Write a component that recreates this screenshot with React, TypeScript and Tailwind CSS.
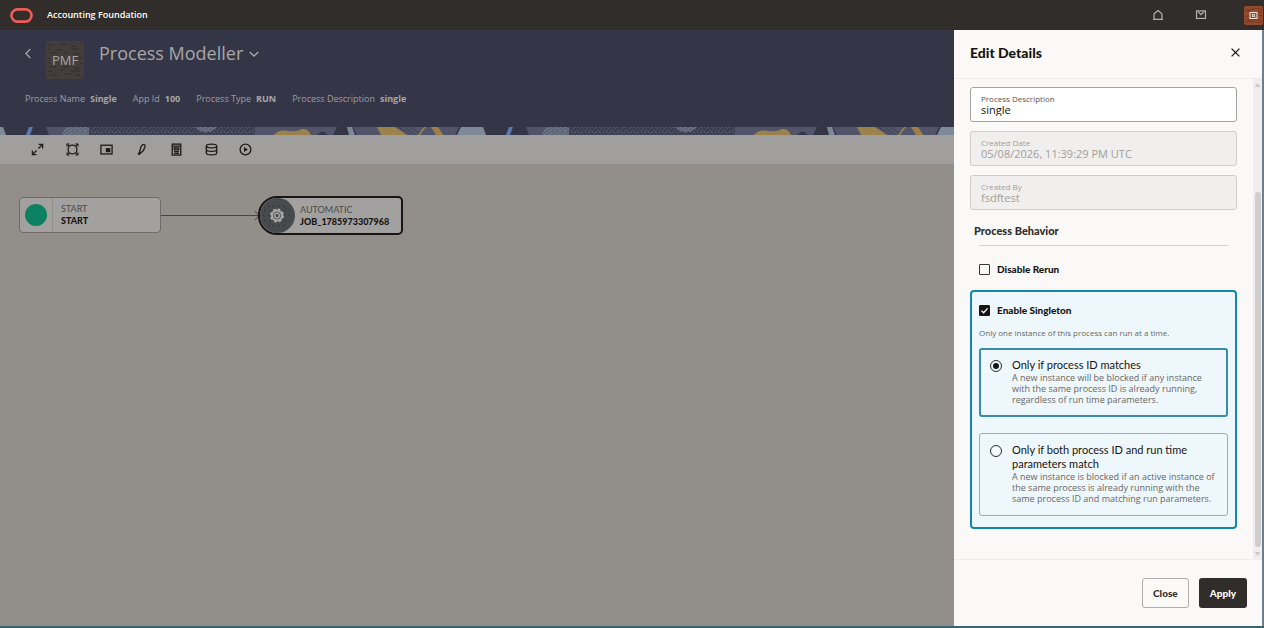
import { useState, type ReactNode } from "react";

function Glyph({ size, children }: { size: number; children: ReactNode }) {
  return (
    <svg width={size} height={size} viewBox="0 0 14 14" fill="none" stroke="currentColor" strokeWidth="1.4" aria-hidden="true" className="shrink-0">
      {children}
    </svg>
  );
}

function TopBar() {
  return (
    <header className="flex h-[30px] shrink-0 items-center bg-[#312d2a]">
      <svg width="23" height="15" viewBox="0 0 23 15" className="ml-[10px] shrink-0" role="img" aria-label="Oracle">
        <rect x="1.5" y="1.4" width="20" height="12.2" rx="6.1" fill="none" stroke="#ee5e57" strokeWidth="2.6" />
      </svg>
      <span className="ml-[14px] text-[9px] font-semibold text-white">Accounting Foundation</span>
      <div className="ml-auto flex items-center text-[#b5b2ae]">
        <button type="button" aria-label="Home" className="mr-[31px]">
          <Glyph size={12}>
            <path d="M2.4 12.2V5.6L7 1.8l4.6 3.8v6.6M1.2 12.2h11.6" />
          </Glyph>
        </button>
        <button type="button" aria-label="Messages" className="mr-[37px]">
          <Glyph size={12}>
            <rect x="1.8" y="2.2" width="10.4" height="8.8" />
            <path d="M3.6 3.2 7 6.6l3.4-3.4" />
          </Glyph>
        </button>
        <button type="button" aria-label="Account" className="mr-px h-[19px] w-[19px]">
          <svg width="19" height="19" viewBox="0 0 19 19">
            <rect width="19" height="19" rx="2" fill="#924b2c" />
            <path d="M1 3q4 2 8 0t9 1M1 6q3-2 5 0M13 6q3-1 5 1M1 10q2 1 4 0M14 10q2-1 4 0M1 13q3 2 6 1t11 0M1 16q5-1 9 0t8 0" stroke="#6f361f" strokeWidth=".8" fill="none" />
            <rect x="6" y="6.5" width="7" height="6" fill="none" stroke="#f3e7df" />
            <path d="M8.5 8v3M8.5 8.5h2v1.8h-2M10.5 10l.6 1.4" fill="none" stroke="#f3e7df" strokeWidth=".8" />
          </svg>
        </button>
      </div>
    </header>
  );
}

const facts: [string, string][] = [
  ["Process Name", "Single"],
  ["App Id", "100"],
  ["Process Type", "RUN"],
  ["Process Description", "single"],
];

function Banner() {
  return (
    <section className="h-[97px] shrink-0 bg-[#343647] text-[#a8a6a5]">
      <div className="flex h-[58px] items-start pt-[11px] pl-[22px]">
        <button type="button" aria-label="Back" className="mt-[6px]">
          <Glyph size={13}>
            <path d="M9 2 4.2 7 9 12" />
          </Glyph>
        </button>
        <div className="ml-[11px] grid h-[38px] w-[38px] place-items-center">
          <svg width="38" height="38" viewBox="0 0 38 38" className="col-start-1 row-start-1" aria-hidden="true">
            <rect width="38" height="38" rx="4" fill="#433e3b" />
            <path
              d="M2 4h6m5-1h7m5 2h5m3-2h3M1 8h4m6 1h6m8-1h8M4 12h8m6 0h4m6 1h7M1 17h3m28 0h5M2 22h2m30 0h3M3 26h7m5 0h8m5 1h6M1 30h6m7-1h5m6 1h9M4 34h8m6-1h7m4 1h5"
              stroke="#322d2a"
            />
          </svg>
          <span className="col-start-1 row-start-1 text-[13px] leading-none">PMF</span>
        </div>
        <h1 className="ml-[15px] text-[18px] leading-[24px]">Process Modeller</h1>
        <button type="button" aria-label="Open process menu" className="mt-[7px] ml-[5px]">
          <Glyph size={12}>
            <path d="M2 4.6 7 9.4l5-4.8" strokeWidth="1.7" />
          </Glyph>
        </button>
      </div>
      <dl className="flex gap-4 pt-[4px] pl-[25px] text-[9px] leading-[14px] whitespace-nowrap">
        {facts.map(([name, value]) => (
          <div key={name} className="flex gap-[5px]">
            <dt className="text-[#9f9da1]">{name}</dt>
            <dd className="font-bold">{value}</dd>
          </div>
        ))}
      </dl>
    </section>
  );
}

function PatternStrip() {
  return (
    <svg width="100%" height="8" className="block shrink-0" aria-hidden="true">
      <defs>
        <pattern id="speckle" width="7" height="5" patternUnits="userSpaceOnUse">
          <rect width="7" height="5" fill="#3a3d50" />
          <path d="M0 .5h1M3 .5h2M1 2.5h1M5 2.5h1M0 4.5h2M4 4.5h1M2 1.5h1M6 3.5h1" stroke="#50566b" />
        </pattern>
        <pattern id="light-speckle" width="5" height="4" patternUnits="userSpaceOnUse">
          <rect width="5" height="4" fill="#5d6577" />
          <path d="M0 .5h1M3 1.5h1M1 2.5h1M4 3.5h1" stroke="#788391" />
        </pattern>
        <pattern id="strip" width="480" height="8" patternUnits="userSpaceOnUse">
          <rect width="480" height="8" fill="#343647" />
          <path d="M0 0h3l3 8H0zM347 0h5l3 8h-6zM461 0h19v8h-23z" fill="#7d8899" />
          <path d="M29 0h4l-3 8h-4z" fill="#5d7aae" />
          <path d="M46 0h20l-5 8H49z" fill="#50546a" />
          <path d="M66 0h23v8H61z" fill="url(#light-speckle)" />
          <path d="M89 0h166v8H89z" fill="url(#speckle)" />
          <path d="M195 0h22q-4 5-11 5t-11-5z" fill="url(#light-speckle)" />
          <path d="M255 0h82l-4 8h-5q-5-7-11 0h-62zM353 0h106l-4 8H357z" fill="#52556a" />
          <path d="M274 8q5-6 14-4 9 1 14-2 6-1 9 6z" fill="#9a824a" />
          <path d="M377 0h18l12 8h-26zM431 0h7l5 8h-7zM424 0h2l-6 8h-2z" fill="#9a824a" />
          <path d="M398 0l14 8M404 0l12 8M410 0l9 6" stroke="#3d4054" />
        </pattern>
      </defs>
      <rect width="100%" height="8" fill="url(#strip)" />
    </svg>
  );
}

const tools: { name: string; art: ReactNode }[] = [
  { name: "Fit to screen", art: <path d="M8.2 1.5h4.3v4.3M12.5 1.5 8 6M5.8 12.5H1.5V8.2M1.5 12.5 6 8" /> },
  {
    name: "Layout",
    art: (
      <>
        <circle cx="7" cy="7" r="4.8" />
        <path d="M1 4V1h3M10 1h3v3M13 10v3h-3M4 13H1v-3" strokeWidth="1" />
        <path d="M1.4 1.4l2.2 2.2M12.6 1.4l-2.2 2.2M1.4 12.6l2.2-2.2M12.6 12.6l-2.2-2.2" />
      </>
    ),
  },
  {
    name: "Overview",
    art: (
      <>
        <rect x="1" y="2.4" width="12" height="9.4" />
        <rect x="7" y="6.2" width="3.4" height="3" fill="currentColor" />
      </>
    ),
  },
  { name: "Edit", art: <path d="M6.6 3.6Q8.4 1.2 9.8 1.4q1.6.6 1 2.6L9 8.2 6 10.8 4.8 10zM4.9 9.6 3.4 12.6M4 12.8l2.4-2.2" /> },
  {
    name: "Definition",
    art: (
      <>
        <rect x="2.4" y="1.2" width="9.2" height="11.8" />
        <path d="M2.4 3.4h9.2M4.6 5.4h4.8v2H4.6zM4.4 9.2h5.2M4.4 11.2h5.2" />
      </>
    ),
  },
  {
    name: "Data",
    art: (
      <>
        <ellipse cx="7" cy="3.2" rx="5.6" ry="2" />
        <path d="M1.4 3.2v7.6c0 1.1 2.5 2 5.6 2s5.6-.9 5.6-2V3.2M1.4 7c0 1.1 2.5 2 5.6 2s5.6-.9 5.6-2" />
      </>
    ),
  },
  {
    name: "Run",
    art: (
      <>
        <circle cx="7" cy="7" r="5.8" />
        <path d="M5.4 4.4v5.2L9.6 7z" fill="currentColor" stroke="none" />
      </>
    ),
  },
];

function Toolbar() {
  return (
    <div role="toolbar" aria-label="Process tools" className="flex h-[30px] shrink-0 items-center border-b border-[#93908d] bg-[#a09f9d] pl-[31px] text-[#1d1b1a]">
      <div className="grid w-[243px] grid-cols-7">
        {tools.map((tool) => (
          <button key={tool.name} type="button" aria-label={tool.name} className="justify-self-start">
            <Glyph size={13}>{tool.art}</Glyph>
          </button>
        ))}
      </div>
    </div>
  );
}

function Canvas() {
  return (
    <main className="relative min-h-0 flex-1 bg-[#928f8b]">
      <div className="absolute top-8 left-[19px] flex h-[36px] w-[142px] items-stretch rounded-[4px] border border-[#6d6b69] bg-[#a2a1a0]">
        <span className="grid w-[33px] place-items-center border-r border-[#939190]">
          <span className="h-[22px] w-[22px] rounded-full bg-[#0c8162]" />
        </span>
        <span className="flex flex-col justify-center pl-[8px] font-['Lato'] text-[9px] leading-[12px]">
          <span className="text-[#4b4947]">START</span>
          <span className="font-black text-[#161513]">START</span>
        </span>
      </div>
      <svg width="100" height="12" viewBox="0 0 100 12" className="absolute top-11 left-[161px]" aria-hidden="true">
        <path d="M0 6.5h98M94 2l4 4.5-4 4.5" fill="none" stroke="#484643" />
      </svg>
      <div className="absolute top-[31px] left-[258px] flex h-[39px] w-[145px] items-center rounded-l-[19px] rounded-r-[5px] border-2 border-[#171615] bg-[#a2a1a0]">
        <svg width="35" height="35" viewBox="0 0 35 35" className="shrink-0" role="img" aria-label="Automatic job">
          <circle cx="17.5" cy="17.5" r="17.5" fill="#484b4d" />
          <path d="M8 8.5h20M4 12.5h26M3 17.5h30M4 22.5h26M8 27.5h20" stroke="#34373d" strokeWidth="1.6" strokeDasharray="1.6 3.4" />
          <circle cx="17" cy="17.5" r="5" fill="#5b5d5e" stroke="#aaa9a8" strokeWidth="2" />
          <circle cx="17" cy="17.5" r="6.2" fill="none" stroke="#aaa9a8" strokeWidth="1.6" strokeDasharray="2.8 2.07" />
          <circle cx="17" cy="17.5" r="2.3" fill="#484b4d" stroke="#aaa9a8" strokeWidth="1.3" />
        </svg>
        <span className="flex flex-col pl-[5px] font-['Lato'] text-[9px] leading-[12px]">
          <span className="text-[#4b4947]">AUTOMATIC</span>
          <span className="font-black text-[#161513]">JOB_1785973307968</span>
        </span>
      </div>
    </main>
  );
}

function Field({ id, label, value, locked }: { id: string; label: string; value: string; locked?: boolean }) {
  return (
    <div
      className={
        locked
          ? "flex h-[35px] flex-col justify-center rounded-[3px] border border-[#cfcdcb] bg-[#f1efed] px-[10px] pb-px text-[#a19e9b]"
          : "flex h-[35px] flex-col justify-center rounded-[3px] border border-[#a5a3a1] bg-white px-[10px] pb-px text-[#161513]"
      }
    >
      <label htmlFor={id} className={locked ? "text-[8px] leading-[11px]" : "text-[8px] leading-[11px] text-[#5b5652]"}>
        {label}
      </label>
      <input id={id} defaultValue={value} disabled={locked} className="w-full text-[11px] leading-[12px] outline-none" />
    </div>
  );
}

function Check({ label, checked, onChange }: { label: string; checked: boolean; onChange: (v: boolean) => void }) {
  return (
    <label className="flex h-4 items-center gap-[7px] font-['Lato'] text-[10px] font-black text-[#161513]">
      <span className="grid place-items-center">
        <input
          type="checkbox"
          checked={checked}
          onChange={(e) => onChange(e.target.checked)}
          className="col-start-1 row-start-1 h-[11px] w-[11px] appearance-none rounded-[1px] border border-[#3a3632] checked:border-[#161513] checked:bg-[#161513]"
        />
        {checked && (
          <svg width="9" height="9" viewBox="0 0 9 9" className="pointer-events-none col-start-1 row-start-1" aria-hidden="true">
            <path d="M1.5 4.8 3.6 6.8 7.6 2.4" fill="none" stroke="#fff" strokeWidth="1.3" />
          </svg>
        )}
      </span>
      {label}
    </label>
  );
}

const modes = [
  {
    id: "by-id",
    title: "Only if process ID matches",
    text: "A new instance will be blocked if any instance with the same process ID is already running, regardless of run time parameters.",
  },
  {
    id: "by-id-and-params",
    title: "Only if both process ID and run time parameters match",
    text: "A new instance is blocked if an active instance of the same process is already running with the same process ID and matching run parameters.",
  },
];

function DetailsDrawer() {
  const [rerunOff, setRerunOff] = useState(false);
  const [singleton, setSingleton] = useState(true);
  const [mode, setMode] = useState("by-id");

  return (
    <aside aria-labelledby="drawer-title" className="flex w-[310px] shrink-0 flex-col border-r-2 border-[#6f7e8b] bg-[#fbf9f8]">
      <div className="flex h-[49px] shrink-0 items-center justify-between border-b border-[#efedeb] pr-[20px] pb-[3px] pl-4">
        <h2 id="drawer-title" className="font-['Lato'] text-[14px] font-black text-[#161513]">
          Edit Details
        </h2>
        <button type="button" aria-label="Close panel" className="text-[#161513]">
          <Glyph size={13}>
            <path d="m2.8 2.8 8.4 8.4M11.2 2.8l-8.4 8.4" strokeWidth="1.4" />
          </Glyph>
        </button>
      </div>

      <div className="flex min-h-0 flex-1">
        <form className="min-w-0 flex-1 overflow-hidden px-4 pt-2">
          <div className="flex flex-col gap-[9px]">
            <Field id="description" label="Process Description" value="single" />
            <Field id="created-date" label="Created Date" value="05/08/2026, 11:39:29 PM UTC" locked />
            <Field id="created-by" label="Created By" value="fsdftest" locked />
          </div>
          <h3 className="mt-[13px] ml-1 font-['Lato'] text-[11px] leading-4 font-black text-[#312d2a]">Process Behavior</h3>
          <hr className="mx-[9px] mt-[6px] border-[#d4d1ce]" />
          <div className="mt-[15px] ml-[9px]">
            <Check label="Disable Rerun" checked={rerunOff} onChange={setRerunOff} />
          </div>

          <div className="mt-[13px] rounded-[4px] border-2 border-[#1485ae] bg-[#eef7fb] px-[7px] pt-[10px] pb-[11px]">
            <Check label="Enable Singleton" checked={singleton} onChange={setSingleton} />
            <p className="mt-[9px] text-[8px] leading-[12px] text-[#6a6764]">Only one instance of this process can run at a time.</p>
            <div role="radiogroup" aria-label="Singleton scope" className="mt-[9px] flex flex-col gap-4">
              {modes.map((m) => (
                <label
                  key={m.id}
                  className={
                    mode === m.id
                      ? "flex gap-[10px] rounded-[3px] border-2 border-[#3a8caf] px-[9px] pt-[8px] pb-[10px]"
                      : "flex gap-[10px] rounded-[3px] border border-[#a5a9ab] px-[10px] pt-[9px] pb-[11px]"
                  }
                >
                  <input
                    type="radio"
                    name="scope"
                    checked={mode === m.id}
                    onChange={() => setMode(m.id)}
                    aria-labelledby={m.id}
                    className="mt-[2px] h-[12px] w-[12px] shrink-0 appearance-none rounded-full border border-[#312d2a] bg-white bg-clip-content p-[2px] checked:bg-[#161513]"
                  />
                  <span className="min-w-0">
                    <span id={m.id} className="block font-['Lato'] text-[11px] leading-[14px] text-[#161513]">
                      {m.title}
                    </span>
                    <span className="block text-[9px] leading-[11px] text-[#6a6764]">{m.text}</span>
                  </span>
                </label>
              ))}
            </div>
          </div>
        </form>
        <div aria-hidden="true" className="flex w-[9px] flex-col items-center bg-[#f0eeed]">
          <svg width="9" height="10" viewBox="0 0 9 10">
            <path d="M1.5 8h6l-3-4z" fill="#cbc9c8" />
          </svg>
          <div className="mt-auto h-[74%] w-[6px] rounded-full bg-[#d0cecd]" />
          <svg width="9" height="12" viewBox="0 0 9 12">
            <path d="M1.5 5h6l-3 4z" fill="#cbc9c8" />
          </svg>
        </div>
      </div>

      <div className="flex h-[67px] shrink-0 items-center justify-end gap-[10px] border-t border-[#efedeb] pr-[15px] font-['Lato'] text-[10px] font-black">
        <button type="button" className="h-[30px] rounded-[3px] border border-[#b0adab] px-[10px] text-[#312d2a]">
          Close
        </button>
        <button type="button" className="h-[30px] rounded-[3px] bg-[#312d2a] px-[11px] text-white">
          Apply
        </button>
      </div>
    </aside>
  );
}

export default function App() {
  return (
    <div className="flex h-screen flex-col border-b-2 border-[#3b6272] font-['Open_Sans','Noto_Sans',sans-serif]">
      <TopBar />
      <div className="flex min-h-0 flex-1">
        <div className="flex min-w-0 flex-1 flex-col">
          <Banner />
          <PatternStrip />
          <Toolbar />
          <Canvas />
        </div>
        <DetailsDrawer />
      </div>
    </div>
  );
}
